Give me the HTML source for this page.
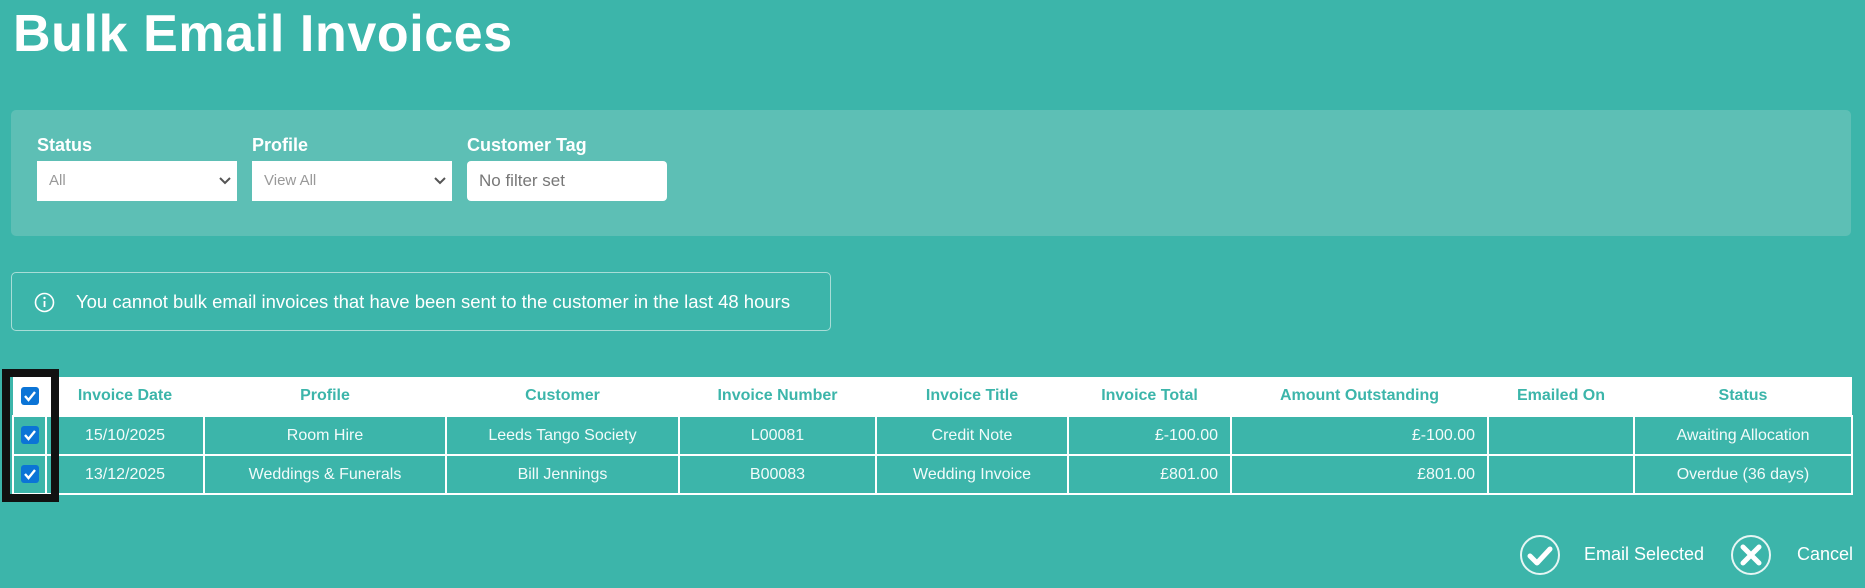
<!DOCTYPE html>
<html><head><meta charset="utf-8"><style>
body{margin:0;width:1865px;height:588px;background:#3cb5aa;font-family:"Liberation Sans",sans-serif;color:#fff;position:relative;overflow:hidden}
h1{position:absolute;left:13px;top:4px;margin:0;font-size:52px;font-weight:bold;letter-spacing:0.6px}
.panel{position:absolute;left:11px;top:110px;width:1840px;height:126px;background:#5dbfb5;border-radius:5px}
.lbl{position:absolute;top:25px;font-size:18px;font-weight:bold}
.sel{position:absolute;top:51px;width:200px;height:40px;background:#fff;color:#999;font-size:15px;line-height:40px;box-sizing:border-box;padding-left:12px}
.sel svg{position:absolute;right:6px;top:15px}
.info{position:absolute;left:11px;top:272px;width:820px;height:59px;border:1px solid #a8ddd7;border-radius:5px;box-sizing:border-box;font-size:18.5px;line-height:57px;padding-left:64px}
.info svg{position:absolute;left:22px;top:19px}
table{position:absolute;left:12px;top:377px;border-collapse:collapse;font-size:16px;table-layout:fixed;width:1839px}
th{background:#fff;color:#3cb5aa;height:38px;font-weight:bold;border:0;padding:0}
td{height:37px;border:2px solid #fff;text-align:center;color:#f2fbfa;padding:0}
td.r{text-align:right;padding-right:12px}
.cb{display:inline-block;width:18px;height:18px;background:#0b74d6;border-radius:3px;vertical-align:middle;position:relative}
.cb svg{position:absolute;left:2px;top:2px}
.hl{position:absolute;left:2px;top:369px;width:41px;height:117px;border:8px solid #111}
.btn{position:absolute;top:532px;font-size:18px;line-height:44px}
</style></head><body>
<h1>Bulk Email Invoices</h1>
<div class="panel">
<div class="lbl" style="left:26px">Status</div>
<div class="lbl" style="left:241px">Profile</div>
<div class="lbl" style="left:456px">Customer Tag</div>
<div class="sel" style="left:26px">All<svg width="12" height="10"><path d="M1 2l5 5 5-5" stroke="#555" stroke-width="2" fill="none"/></svg></div>
<div class="sel" style="left:241px">View All<svg width="12" height="10"><path d="M1 2l5 5 5-5" stroke="#555" stroke-width="2" fill="none"/></svg></div>
<div class="sel" style="left:456px;border-radius:4px;color:#777;font-size:17px">No filter set</div>
</div>
<div class="info"><svg width="21" height="21"><circle cx="10.5" cy="10.5" r="9" stroke="#fff" stroke-width="1.6" fill="none"/><path d="M10.5 9v6" stroke="#fff" stroke-width="1.8"/><circle cx="10.5" cy="6" r="1.2" fill="#fff"/></svg>You cannot bulk email invoices that have been sent to the customer in the last 48 hours</div>
<table>
<colgroup><col style="width:33px"><col style="width:158px"><col style="width:242px"><col style="width:233px"><col style="width:197px"><col style="width:192px"><col style="width:163px"><col style="width:257px"><col style="width:146px"><col style="width:218px"></colgroup>
<tr><th><span class="cb"><svg width="14" height="14"><path d="M2 7l3.5 4L12 3" stroke="#fff" stroke-width="2.4" fill="none"/></svg></span></th><th>Invoice Date</th><th>Profile</th><th>Customer</th><th>Invoice Number</th><th>Invoice Title</th><th>Invoice Total</th><th>Amount Outstanding</th><th>Emailed On</th><th>Status</th></tr>
<tr><td><span class="cb"><svg width="14" height="14"><path d="M2 7l3.5 4L12 3" stroke="#fff" stroke-width="2.4" fill="none"/></svg></span></td><td>15/10/2025</td><td>Room Hire</td><td>Leeds Tango Society</td><td>L00081</td><td>Credit Note</td><td class="r">£-100.00</td><td class="r">£-100.00</td><td></td><td>Awaiting Allocation</td></tr>
<tr><td><span class="cb"><svg width="14" height="14"><path d="M2 7l3.5 4L12 3" stroke="#fff" stroke-width="2.4" fill="none"/></svg></span></td><td>13/12/2025</td><td>Weddings &amp; Funerals</td><td>Bill Jennings</td><td>B00083</td><td>Wedding Invoice</td><td class="r">£801.00</td><td class="r">£801.00</td><td></td><td>Overdue (36 days)</td></tr>
</table>
<div class="hl"></div>
<div class="btn" style="left:1518px"><svg width="44" height="44" style="vertical-align:middle"><circle cx="22" cy="22" r="19" stroke="#e6f6f4" stroke-width="2" fill="none"/><path d="M12 23l7 7 13-14" stroke="#fff" stroke-width="5" fill="none" stroke-linecap="round" stroke-linejoin="round"/></svg><span style="margin-left:22px">Email Selected</span></div>
<div class="btn" style="left:1729px"><svg width="44" height="44" style="vertical-align:middle"><circle cx="22" cy="22" r="19" stroke="#e6f6f4" stroke-width="2" fill="none"/><path d="M14 14l16 16M30 14L14 30" stroke="#fff" stroke-width="5" stroke-linecap="round"/></svg><span style="margin-left:24px">Cancel</span></div>
</body></html>
